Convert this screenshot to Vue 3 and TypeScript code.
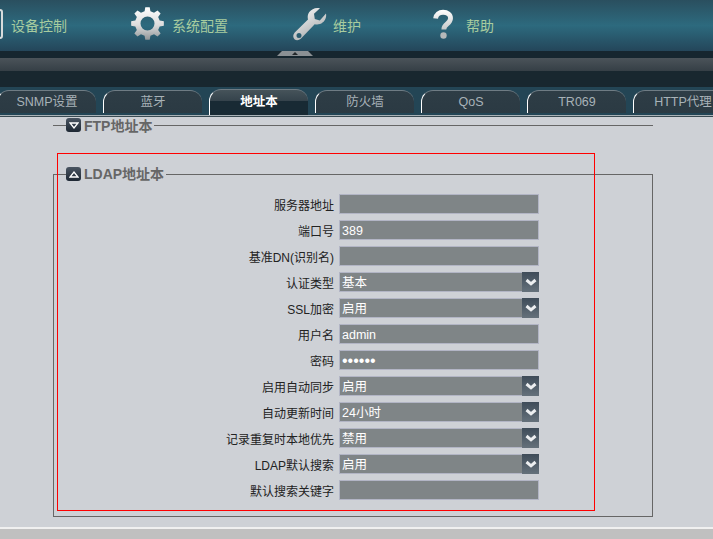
<script setup lang="ts">
interface Row { label: string; value?: string; select?: boolean; password?: boolean }
const tabs = ['SNMP设置', '蓝牙', '地址本', '防火墙', 'QoS', 'TR069', 'HTTP代理']
const rows: Row[] = [
  { label: '服务器地址' },
  { label: '端口号', value: '389' },
  { label: '基准DN(识别名)' },
  { label: '认证类型', value: '基本', select: true },
  { label: 'SSL加密', value: '启用', select: true },
  { label: '用户名', value: 'admin' },
  { label: '密码', value: '••••••', password: true },
  { label: '启用自动同步', value: '启用', select: true },
  { label: '自动更新时间', value: '24小时', select: true },
  { label: '记录重复时本地优先', value: '禁用', select: true },
  { label: 'LDAP默认搜索', value: '启用', select: true },
  { label: '默认搜索关键字' },
]

function gearPath(cx: number, cy: number, outer: number, root: number, hole: number, teeth: number): string {
  const pts: string[] = []
  const step = (Math.PI * 2) / teeth
  for (let i = 0; i < teeth; i++) {
    const a = i * step - Math.PI / 2
    const list: [number, number][] = [
      [root, a - step * 0.3],
      [outer, a - step * 0.17],
      [outer, a + step * 0.17],
      [root, a + step * 0.3],
    ]
    for (const [r, t] of list) {
      pts.push(`${(cx + r * Math.cos(t)).toFixed(2)} ${(cy + r * Math.sin(t)).toFixed(2)}`)
    }
  }
  const ring = `M${cx - hole} ${cy}a${hole} ${hole} 0 1 0 ${hole * 2} 0a${hole} ${hole} 0 1 0 ${-hole * 2} 0z`
  return `M${pts.join('L')}z${ring}`
}
const gear = gearPath(16.5, 16.5, 16.5, 12.5, 7, 8)
</script>

<template>
  <div class="page">
    <header class="nav">
      <div class="nav-item first">
        <span class="device"></span>
        <span class="nav-text">设备控制</span>
      </div>
      <div class="nav-item gear">
        <svg width="34" height="34" viewBox="0 0 34 34">
          <defs>
            <linearGradient id="metal" x1="0" y1="0" x2="0" y2="1">
              <stop offset="0" stop-color="#ffffff" />
              <stop offset="0.55" stop-color="#dcdcdc" />
              <stop offset="1" stop-color="#8f9497" />
            </linearGradient>
          </defs>
          <path fill="url(#metal)" fill-rule="evenodd" stroke-linejoin="round" :d="gear" />
        </svg>
        <span class="nav-text">系统配置</span>
      </div>
      <div class="nav-item wrench">
        <svg width="34" height="34" viewBox="0 0 34 34">
          <defs>
            <linearGradient id="metal2" x1="0" y1="0" x2="0.600" y2="1">
              <stop offset="0" stop-color="#ffffff" />
              <stop offset="1" stop-color="#a8abac" />
            </linearGradient>
          </defs>
          <path fill="url(#metal2)" fill-rule="evenodd" d="M33 6.500c.8 4.500-1.500 9-6 10.500-2 .7-3.700.5-5.300.2L9 30.500c-2.500 3-5.500 3.500-7.500 1.700C-.5 30 0 27 2.500 24.700L15 12.500c-.6-2.500-.4-5 1.300-7.400C18.600 2 22.500.2 27 1.300l-6 5.500.8 5.200 5 1.500zM6 26a2.500 2.500 0 1 0 0 5 2.500 2.500 0 0 0 0-5z" />
        </svg>
        <span class="nav-text">维护</span>
      </div>
      <div class="nav-item help">
        <svg width="24" height="34" viewBox="0 0 24 34">
          <defs>
            <linearGradient id="metal3" gradientUnits="userSpaceOnUse" x1="0" y1="0" x2="0" y2="34">
              <stop offset="0" stop-color="#ffffff" />
              <stop offset="1" stop-color="#a9adae" />
            </linearGradient>
          </defs>
          <g transform="translate(1.500 2.500) scale(0.88 0.9)">
            <path fill="none" stroke="url(#metal3)" stroke-width="5.500" d="M3.500 10C4 5.500 7.500 3 12 3c5 0 8.500 2.700 8.500 6.800 0 3.200-1.800 4.700-4 6.400-2.200 1.700-3.600 3-3.600 6" />
            <circle cx="12.500" cy="29" r="3.600" fill="#b5b8b9" />
          </g>
        </svg>
        <span class="nav-text">帮助</span>
      </div>
    </header>

    <div class="strip"><span class="handle"><i></i></span></div>
    <div class="band"></div>

    <nav class="tabs">
      <div v-for="(t, i) in tabs" :key="t" class="tab" :class="{ active: i === 2 }">{{ t }}</div>
    </nav>

    <main class="content">
      <div class="collapsed">
        <span class="dash"></span>
        <span class="toggle">
          <svg width="10" height="7" viewBox="0 0 10 7"><path d="M1 1h8L5 6z" fill="none" stroke="#fff" stroke-width="1.300" /></svg>
        </span>
        <span class="legend-text">FTP地址本</span>
        <span class="rule"></span>
      </div>

      <fieldset class="group">
        <legend>
          <span class="toggle">
            <svg width="10" height="7" viewBox="0 0 10 7"><path d="M1 6h8L5 1z" fill="none" stroke="#fff" stroke-width="1.300" /></svg>
          </span>
          <span class="legend-text">LDAP地址本</span>
        </legend>
        <div v-for="r in rows" :key="r.label" class="row">
          <label>{{ r.label }}</label>
          <div class="field" :class="{ pw: r.password }">
            <span class="val">{{ r.value }}</span>
            <span v-if="r.select" class="arrow">
              <svg width="12" height="8" viewBox="0 0 12 8"><path d="M1.500 2l4.500 3.800 4.500-3.800" fill="none" stroke="#eceef0" stroke-width="3" /></svg>
            </span>
          </div>
        </div>
      </fieldset>
      <div class="red-box"></div>
    </main>

    <footer class="foot"></footer>
  </div>
</template>

<style>
html, body { margin: 0; overflow: hidden; }
</style>

<style scoped>
.page {
  width: 713px;
  height: 539px;
  display: flex;
  flex-direction: column;
  overflow: hidden;
  font-family: "Liberation Sans", "Noto Sans CJK SC", sans-serif;
  font-size: 12px;
}
.nav {
  height: 51px;
  box-sizing: border-box;
  padding-bottom: 4px;
  display: flex;
  align-items: center;
  background: linear-gradient(#2a4f5f 0, #2d6a7e 50%, #24465a 100%);
}
.nav-item { display: flex; align-items: center; flex: none; }
.nav-text { color: #a8cc9f; font-size: 14px; margin-top: 3px; font-family: "Noto Sans CJK SC", sans-serif; }
.first { width: 131px; margin-left: -3px; gap: 8px; }
.device {
  width: 7px;
  height: 30px;
  border: 2px solid #d8dcdc;
  border-radius: 3px;
  background: #2c5d70;
  box-sizing: border-box;
  margin-left: -1px;
}
.gear { width: 162px; gap: 7px; margin-left: 3px; }
.wrench { width: 138px; gap: 6px; }
.help { gap: 11px; }
svg { display: block; }
.strip { height: 7px; background: #16262f; position: relative; }
.handle {
  position: absolute;
  left: 277px;
  top: 0;
  width: 36px;
  height: 5px;
  background: #8b9094;
  clip-path: polygon(5px 0, 31px 0, 100% 100%, 0 100%);
}
.handle i {
  position: absolute;
  left: 15px;
  top: 1px;
  border: 3px solid transparent;
  border-top: 0;
  border-bottom: 3px solid #23272a;
}
.band {
  height: 29px;
  background: linear-gradient(#4b5359 0, #353f46 45%, #18272f 46%, #18272f 100%);
}
.tabs {
  height: 28px;
  box-sizing: border-box;
  padding-top: 3px;
  background: #234555;
  display: flex;
  gap: 7px;
  align-items: flex-start;
  overflow: hidden;
}
.tab {
  flex: none;
  width: 99px;
  height: 23px;
  box-sizing: border-box;
  padding-top: 2px;
  text-align: center;
  color: #a8b2b8;
  font-size: 12.500px;
  line-height: 18px;
  border-radius: 12px 12px 0 0;
  border-top: 1px solid #6f7c84;
  border-left: 1px solid #fff;
  background: linear-gradient(#2e3d46, #2b3a43);
}
.tab:first-child { margin-left: -3px; }
.tab.active {
  color: #fff;
  font-weight: 700;
  height: 26px;
  margin-top: -1px;
  padding-top: 3px;
  background: linear-gradient(#46535a 0, #34424b 45%, #182a34 46%, #182a34 100%);
}
.content {
  position: relative;
  flex: 1;
  min-height: 0;
  background: #ced1d6;
  padding: 0 60px 0 53px;
  box-shadow: inset 0 1px 0 #a9b2b7, inset 0 2px 0 #3a4a52;
}
.collapsed {
  display: flex;
  align-items: center;
  height: 20px;
}
.dash { width: 13px; height: 1px; background: #666; flex: none; }
.rule { flex: 1; height: 1px; background: #666; margin-left: 2px; }
.toggle {
  width: 15px;
  height: 14px;
  border-radius: 3px;
  background: linear-gradient(#4a5562, #1d2733);
  display: inline-flex;
  align-items: center;
  justify-content: center;
  flex: none;
}
.legend-text { color: #666; font-weight: 700; font-size: 14px; margin-left: 3px; }
.group {
  margin: 31px 0 0;
  padding: 12px 0 0;
  height: 351px;
  box-sizing: border-box;
  border: 1px solid #666;
  min-width: 0;
}
legend {
  margin-left: 12px;
  padding: 0 2px 0 0;
  display: flex;
  align-items: center;
  height: 16px;
  line-height: 16px;
}
.row {
  display: flex;
  align-items: center;
  height: 20px;
  margin-bottom: 6px;
}
label {
  width: 280px;
  margin-right: 5px;
  text-align: right;
  color: #222;
  font-size: 12px;
  white-space: nowrap;
}
.field {
  width: 200px;
  height: 20px;
  box-sizing: border-box;
  border: 1px solid #b2b5c5;
  background: #7f8587;
  color: #fff;
  display: flex;
  align-items: center;
  justify-content: space-between;
  padding-left: 2px;
  font-size: 12.500px;
}
.val { line-height: 18px; padding-top: 1px; }
.pw .val { font-size: 16px; }
.arrow {
  width: 17px;
  height: 20px;
  margin: -1px -1px -1px 0;
  background: linear-gradient(#3f4c59, #65717b);
  display: flex;
  align-items: center;
  justify-content: center;
  flex: none;
}
.red-box {
  position: absolute;
  left: 57px;
  top: 38px;
  width: 538px;
  height: 358px;
  box-sizing: border-box;
  border: 1px solid #f00;
  pointer-events: none;
}
.foot {
  height: 12px;
  box-sizing: border-box;
  background: #c0c0c0;
  border-top: 2px solid #f0f0f0;
}
</style>
